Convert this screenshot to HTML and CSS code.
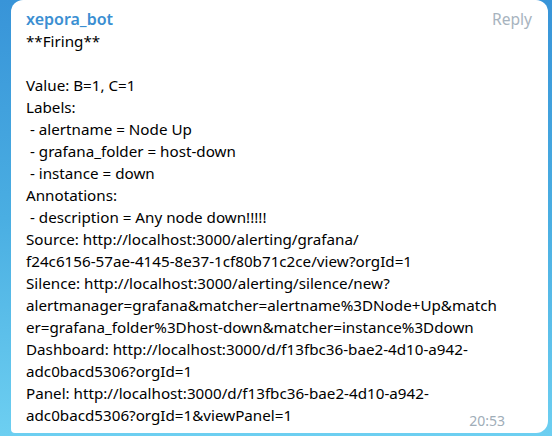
FILE: index.html
```html
<!DOCTYPE html>
<html>
<head>
<meta charset="utf-8">
<link rel="stylesheet" href="styles.css">
</head>
<body>
<div class="bubble">
  <div class="head">
    <span class="name">xepora_bot</span>
    <span class="reply">Reply</span>
  </div>
  <div class="text">**Firing**<br>
<br>
Value: B=1, C=1<br>
Labels:<br>
&nbsp;- alertname = Node Up<br>
&nbsp;- grafana_folder = host-down<br>
&nbsp;- instance = down<br>
Annotations:<br>
&nbsp;- description = Any node down!!!!!<br>
Source: http://localhost:3000/alerting/grafana/<br>
f24c6156-57ae-4145-8e37-1cf80b71c2ce/view?orgId=1<br>
Silence: http://localhost:3000/alerting/silence/new?<br>
alertmanager=grafana&amp;matcher=alertname%3DNode+Up&amp;match<br>
er=grafana_folder%3Dhost-down&amp;matcher=instance%3Ddown<br>
Dashboard: http://localhost:3000/d/f13fbc36-bae2-4d10-a942-<br>
adc0bacd5306?orgId=1<br>
Panel: http://localhost:3000/d/f13fbc36-bae2-4d10-a942-<br>
adc0bacd5306?orgId=1&amp;viewPanel=1</div>
  <span class="time">20:53</span>
</div>
</body>
</html>
```

FILE: styles.css
```css
html, body {
  margin: 0;
  height: 100%;
}
body {
  width: 552px;
  height: 436px;
  overflow: hidden;
  background: linear-gradient(180deg, #3894d8 0%, #4aaee2 50%, #6dcff1 100%);
  font-family: "Noto Sans", "Open Sans", sans-serif;
}
.bubble {
  position: relative;
  box-sizing: border-box;
  margin: 0 4px 0 11px;
  height: 433px;
  background: #ffffff;
  border-radius: 12px 12px 12px 4px;
  padding: 8px 15px 0 15px;
}
.head {
  display: flex;
  justify-content: space-between;
  align-items: baseline;
  height: 22px;
  line-height: 22px;
}
.name {
  font-size: 16px;
  font-weight: 600;
  color: #3b8fd2;
}
.reply {
  font-size: 15.6px;
  color: #a7b3be;
  margin-right: 1px;
}
.text {
  font-size: 15.2px;
  line-height: 22px;
  color: #000000;
  white-space: nowrap;
}
.time {
  position: absolute;
  right: 43px;
  bottom: 5px;
  font-size: 14px;
  line-height: 14px;
  color: #a0adb8;
}
```
